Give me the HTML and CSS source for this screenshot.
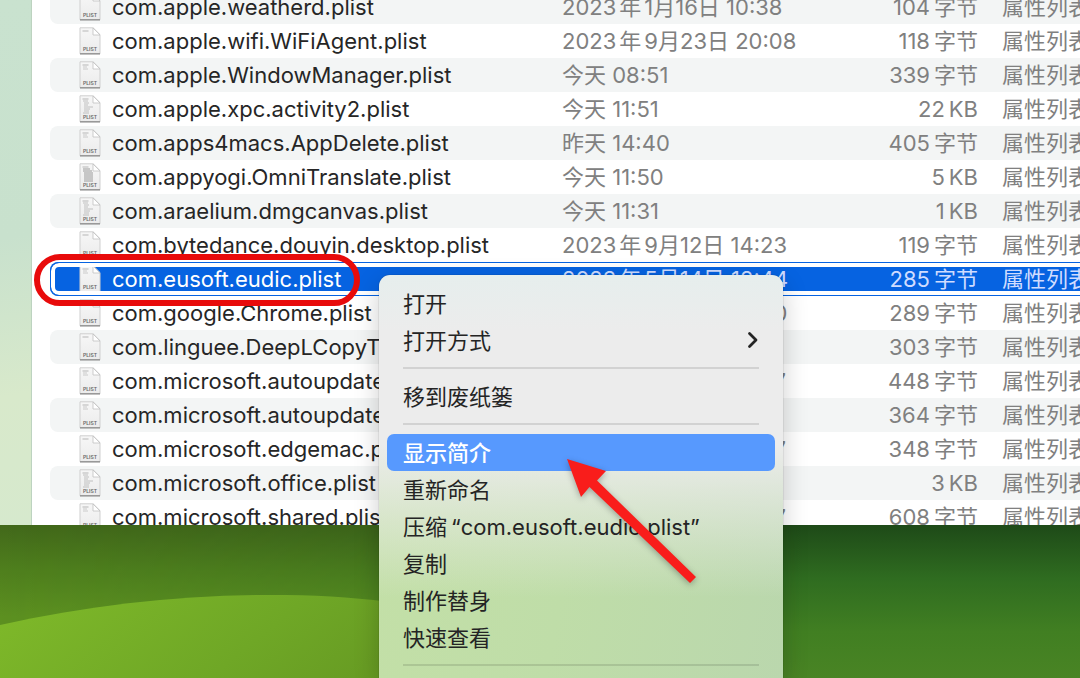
FILE: index.html
```
<!DOCTYPE html>
<html lang="zh-CN">
<head>
<meta charset="utf-8">
<title>Preferences</title>
<link rel="stylesheet" href="styles.css">
</head>
<body>
<svg class="defs" width="0" height="0" aria-hidden="true">
  <defs>
    <linearGradient id="paper" x1="0" y1="0" x2="0" y2="1">
      <stop offset="0" stop-color="#f7f7f7"/><stop offset="1" stop-color="#ebebeb"/>
    </linearGradient>
    <linearGradient id="hill" x1="0" y1="0.4" x2="1" y2="0.6">
      <stop offset="0" stop-color="#7db729"/><stop offset="0.5" stop-color="#6fa726"/><stop offset="1" stop-color="#629421"/>
    </linearGradient>
    <linearGradient id="back-hill" x1="0" y1="0" x2="0" y2="1">
      <stop offset="0" stop-color="#42681a"/><stop offset="0.3" stop-color="#4f7f1d"/><stop offset="0.6" stop-color="#5c9020"/><stop offset="1" stop-color="#5c9020"/>
    </linearGradient>
    <linearGradient id="fade">
      <stop offset="0" stop-color="#fff"/><stop offset="0.45" stop-color="#ccc"/><stop offset="1" stop-color="#000"/>
    </linearGradient>
    <mask id="fade-right" maskUnits="userSpaceOnUse" x="0" y="0" width="800" height="153">
      <rect width="800" height="153" fill="url(#fade)"/>
    </mask>
    <symbol id="doc" viewBox="0 0 22 28">
      <path d="M1 .8h13.2L21 7.6v19.2H1z" fill="url(#paper)" stroke="#cfcfcf" stroke-width="1"/>
      <path d="M1 26.8h20" stroke="#929292" stroke-width="1.4"/>
      <path d="M14 1v7h7z" fill="#fff" stroke="#c0c0c0" stroke-width=".8"/>
      <path d="M3.500 4h6" stroke="#c4c4c4" stroke-width="1.300"/>
    </symbol>
    <symbol id="lines-few" viewBox="0 0 22 28">
      <path d="M4 6h4M4 8h5" stroke="#c9c9c9" stroke-width="1.200"/>
    </symbol>
    <symbol id="lines-many" viewBox="0 0 22 28">
      <path d="M4 6h5M5 8h5M5 10h4M5 12h9M5 14h6M5 16h5M4 18h6" stroke="#bfbfbf" stroke-width="1.200"/>
    </symbol>
    <symbol id="lines-dense" viewBox="0 0 22 28">
      <path d="M4 6h7M4 8h9M5 10h9M5 12h9M5 14h9M5 16h9M5 18h9" stroke="#b8b8b8" stroke-width="1.300"/>
    </symbol>
  </defs>
</svg>
<main class="desktop">
  <section class="finder">
    <div class="sidebar"></div>
    <div class="list">
      <table class="files">
        <colgroup><col class="col-name"><col class="col-date"><col class="col-size"><col></colgroup>
        <tbody id="rows"></tbody>
      </table>
    </div>
  </section>
  <div class="wallpaper">
    <svg class="scene" viewBox="0 0 1080 153" preserveAspectRatio="none" aria-hidden="true">
      <rect width="800" height="153" fill="url(#back-hill)" mask="url(#fade-right)"/>
      <path d="M0 100C90 80 180 70 270 70S420 78 520 104V153H0z" fill="url(#hill)"/>
    </svg>
  </div>

  <div class="menu" role="menu">
    <button class="item" role="menuitem">打开</button>
    <button class="item" role="menuitem">打开方式
      <svg class="chevron" viewBox="0 0 12 18" aria-hidden="true"><path d="M2.500 2.500 9 9l-6.500 6.500" fill="none" stroke="currentColor" stroke-width="2.800" stroke-linecap="round" stroke-linejoin="round"/></svg>
    </button>
    <hr class="rule">
    <button class="item" role="menuitem">移到废纸篓</button>
    <hr class="rule">
    <button class="item active" role="menuitem">显示简介</button>
    <button class="item" role="menuitem">重新命名</button>
    <button class="item" role="menuitem"><span>压缩<span class="quoted">“com.eusoft.eudic.plist”</span></span></button>
    <button class="item" role="menuitem">复制</button>
    <button class="item" role="menuitem">制作替身</button>
    <button class="item" role="menuitem">快速查看</button>
    <hr class="rule">
  </div>

  <div class="callout"></div>
  <svg class="arrow" viewBox="0 0 130 124" aria-hidden="true">
    <path d="M0 0 39 12 30 21.500 129 118 123 124 22.500 28 14 38z" fill="#f91d1b"/>
  </svg>
</main>
<script src="files.js"></script>
</body>
</html>
```
FILE: styles.css
```
* { box-sizing: border-box; }
body {
  margin: 0;
  font-family: Inter, "Noto Sans CJK SC", sans-serif;
  font-size: 22px;
  color: #262626;
}
.defs { position: absolute; }
.desktop {
  position: relative;
  display: flex;
  flex-direction: column;
  height: 100vh;
  overflow: hidden;
}
.finder {
  flex: 1;
  min-height: 0;
  display: flex;
  overflow: hidden;
}
.sidebar {
  width: 32px;
  flex: none;
  background: linear-gradient(170deg, #c9e2cf 0%, #c8e1cd 45%, #d8e9cb 75%, #d6e9cd 100%);
  box-shadow: inset -1px 0 #bdd3c0;
}
.list {
  flex: 1;
  min-width: 0;
  overflow: hidden;
  padding-left: 18px;
  background: #fff;
}
.files {
  width: 100%;
  margin-top: -10px;
  table-layout: fixed;
  border-collapse: separate;
  border-spacing: 0;
}
.col-name { width: 512px; }
.col-date { width: 300px; }
.col-size { width: 118px; }
.files td {
  height: 34px;
  padding: 0;
  line-height: 34px;
  white-space: nowrap;
  color: #808080;
}
.files tr:nth-child(odd) td { background: #f3f5f5; }
.files .name {
  border-radius: 8px 0 0 8px;
  color: #262626;
}
.file {
  display: flex;
  align-items: center;
  gap: 11px;
  height: 34px;
  padding-left: 29px;
}
.icon { width: 22px; height: 28px; flex: none; }
.icon text {
  font: 600 5px Inter, sans-serif;
  fill: #666;
}
.files .size { padding-right: 2px; text-align: right; }
.files .kind { padding-left: 22px; overflow: hidden; }
.gap { margin: 0 3px; }
.gap-left { margin-left: 4px; }

.files tr.selected td { background: #0663e1; color: #cfdcff; }
.files tr.selected .name {
  position: relative;
  color: #fff;
}
.files tr.selected .name::after {
  content: "";
  position: absolute;
  top: 0;
  bottom: 0;
  left: 0;
  width: 100vw;
  border: 1px solid #0663e1;
  border-radius: 9px;
  box-shadow: inset 0 0 0 4px #fff;
}

.wallpaper {
  flex: none;
  height: 153px;
  background: linear-gradient(#1e4a18, #2f6c20 35%, #417f22 70%, #498424);
}
.scene { display: block; width: 100%; height: 100%; }

.menu {
  position: absolute;
  left: 379px;
  top: 275px;
  bottom: 0;
  width: 404px;
  padding: 10px 8px 0;
  overflow: hidden;
  border-radius: 11px 11px 0 0;
  background:
    linear-gradient(#e6eeed, #ececec 14%, #ececec 42%, rgba(236, 236, 236, 0) 80%),
    linear-gradient(100deg, #c4e0a7, #bfdda8 50%, #bad7ad);
  box-shadow: 0 0 1px rgba(0, 0, 0, .6), 0 8px 26px rgba(0, 0, 0, .2);
}
.item {
  display: flex;
  align-items: center;
  width: 100%;
  height: 37px;
  padding: 0 16px 4px;
  border: 0;
  border-radius: 7px;
  background: none;
  font: inherit;
  color: #242424;
}
.item.active { background: #5799fe; color: #fff; font-weight: 500; }
.quoted { margin-left: 4px; }
.chevron { width: 12px; height: 18px; margin: 2px 0 0 auto; }
.rule {
  height: 2px;
  margin: 8px 16px 9px;
  border: 0;
  background: rgba(0, 0, 0, .11);
}

.callout {
  position: absolute;
  left: 34px;
  top: 254px;
  width: 326px;
  height: 52px;
  border: 6px solid #e80b0b;
  border-radius: 26px;
}
.arrow {
  position: absolute;
  left: 567px;
  top: 459px;
  width: 130px;
  height: 124px;
  overflow: visible;
  filter: drop-shadow(0 2px 3px rgba(0, 0, 0, .3));
}
```
FILE: files.js
```
const files = [
  ["com.apple.weatherd.plist", "2023年1月16日 10:38", "104字节", ""],
  ["com.apple.wifi.WiFiAgent.plist", "2023年9月23日 20:08", "118字节", ""],
  ["com.apple.WindowManager.plist", "今天 08:51", "339字节", "few"],
  ["com.apple.xpc.activity2.plist", "今天 11:51", "22KB", "many"],
  ["com.apps4macs.AppDelete.plist", "昨天 14:40", "405字节", "few"],
  ["com.appyogi.OmniTranslate.plist", "今天 11:50", "5KB", "dense"],
  ["com.araelium.dmgcanvas.plist", "今天 11:31", "1KB", "many"],
  ["com.bytedance.douyin.desktop.plist", "2023年9月12日 14:23", "119字节", ""],
  ["com.eusoft.eudic.plist", "2023年5月14日 12:44", "285字节", "few"],
  ["com.google.Chrome.plist", "2023年9月12日 14:20", "289字节", ""],
  ["com.linguee.DeepLCopyTranslator.plist", "今天 08:51", "303字节", ""],
  ["com.microsoft.autoupdate.fba.plist", "2023年9月12日 14:27", "448字节", "few"],
  ["com.microsoft.autoupdate2.plist", "2023年9月23日 11:31", "364字节", "few"],
  ["com.microsoft.edgemac.plist", "2023年9月12日 14:27", "348字节", ""],
  ["com.microsoft.office.plist", "今天 11:31", "3KB", "many"],
  ["com.microsoft.shared.plist", "2023年9月12日 14:27", "608字节", "few"]
];

document.getElementById("rows").innerHTML = files.map(([name, date, size, lines]) => `
  <tr${name === "com.eusoft.eudic.plist" ? ' class="selected"' : ""}>
    <td class="name"><div class="file">
      <svg class="icon" viewBox="0 0 22 28" aria-hidden="true"><use href="#doc"/>${lines ? `<use href="#lines-${lines}"/>` : ""}<text x="4" y="24">PLIST</text></svg>
      <span>${name}</span></div></td>
    <td>${date.replace("年", '<span class="gap">年</span>')}</td>
    <td class="size">${size.replace(/(\d+)(\D+)/, '$1<span class="gap-left">$2</span>')}</td>
    <td class="kind">属性列表</td>
  </tr>`).join("");
```
